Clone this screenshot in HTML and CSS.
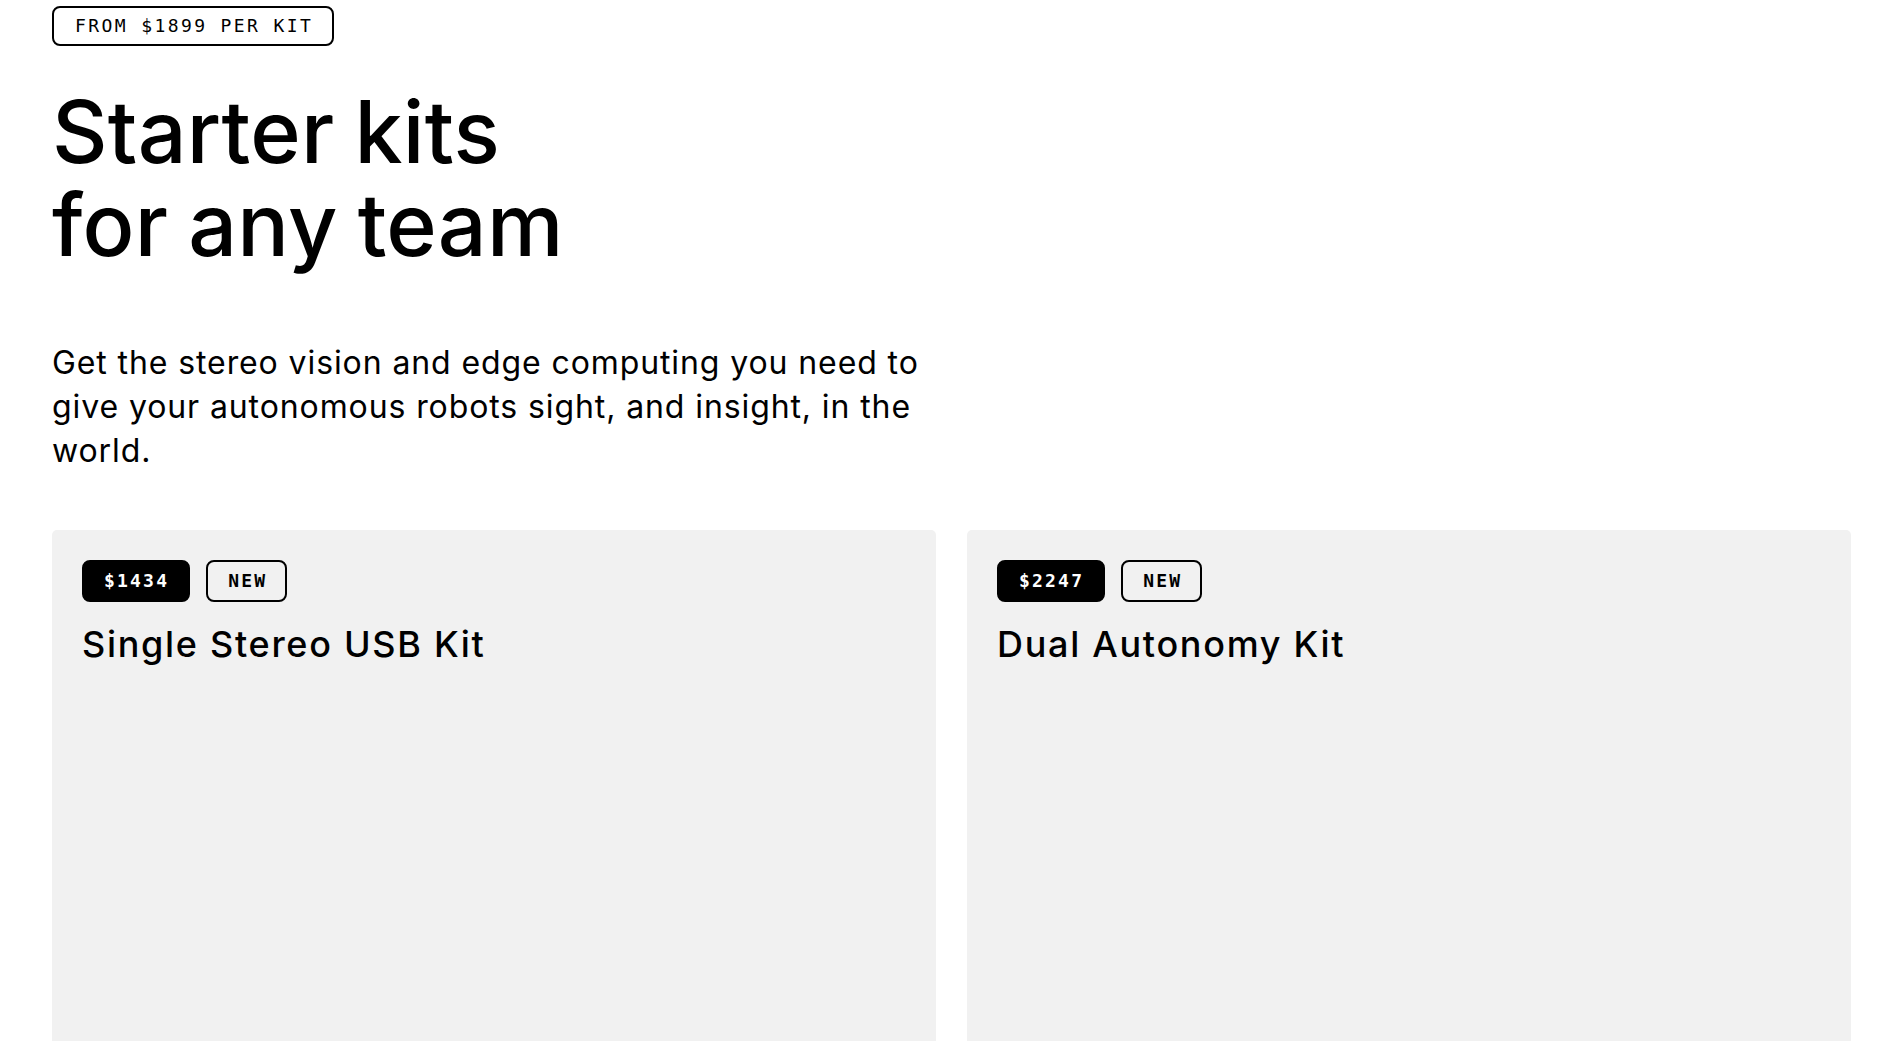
FILE: index.html
```html
<!DOCTYPE html>
<html lang="en">
<head>
<meta charset="utf-8">
<title>Starter kits</title>
<link rel="stylesheet" href="styles.css">
</head>
<body>
<main class="page">
  <section class="hero">
    <span class="eyebrow">FROM $1899 PER KIT</span>
    <h1 class="title">Starter kits<br>for any team</h1>
    <p class="lead">Get the stereo vision and edge computing you need to give your autonomous robots sight, and insight, in the world.</p>
  </section>
  <section class="kits">
    <article class="kit">
      <div class="tags">
        <span class="tag tag-price">$1434</span>
        <span class="tag tag-new">NEW</span>
      </div>
      <h2 class="kit-name">Single Stereo USB Kit</h2>
    </article>
    <article class="kit">
      <div class="tags">
        <span class="tag tag-price">$2247</span>
        <span class="tag tag-new">NEW</span>
      </div>
      <h2 class="kit-name">Dual Autonomy Kit</h2>
    </article>
  </section>
</main>
</body>
</html>
```
FILE: styles.css
```css
* { box-sizing: border-box; }
html, body { margin: 0; padding: 0; background: #fff; }
body {
  font-family: "Inter", "Liberation Sans", sans-serif;
  color: #000;
}
.page {
  padding: 6px 33px 0 52px;
}
.hero {
  display: flex;
  flex-direction: column;
  align-items: flex-start;
}
.eyebrow {
  display: inline-block;
  border: 2px solid #000;
  border-radius: 8px;
  padding: 0 19px 0 21px;
  line-height: 36px;
  font-family: "DejaVu Sans Mono", "Liberation Mono", monospace;
  font-size: 18px;
  letter-spacing: 2.4px;
}
.title {
  margin: 40px 0 0;
  font-size: 86px;
  line-height: 93px;
  font-weight: 500;
  letter-spacing: 0.2px;
  word-spacing: -3px;
}
.lead {
  margin: 69px 0 0;
  max-width: 910px;
  font-size: 32px;
  line-height: 44px;
  font-weight: 400;
  letter-spacing: 0.9px;
}
.kits {
  margin-top: 57px;
  display: grid;
  grid-template-columns: 1fr 1fr;
  gap: 31px;
}
.kit {
  background: #f1f1f1;
  border-radius: 5px;
  padding: 30px;
  min-height: 640px;
}
.tags {
  display: flex;
  gap: 16px;
}
.tag {
  display: inline-block;
  height: 42px;
  line-height: 38px;
  border: 2px solid #000;
  border-radius: 8px;
  font-family: "DejaVu Sans Mono", "Liberation Mono", monospace;
  font-size: 18px;
  font-weight: 700;
  letter-spacing: 2.2px;
}
.tag-price {
  background: #000;
  color: #fff;
  padding: 0 19px 0 20px;
}
.tag-new {
  background: transparent;
  color: #000;
  padding: 0 18px 0 20px;
}
.kit-name {
  margin: 22px 0 0;
  font-size: 36px;
  line-height: 40px;
  font-weight: 500;
  letter-spacing: 1.7px;
}
```
